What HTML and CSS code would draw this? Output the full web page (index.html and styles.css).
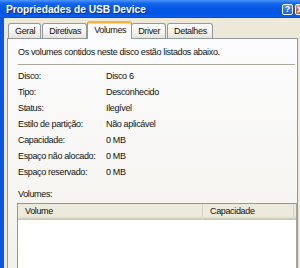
FILE: index.html
```html
<!DOCTYPE html>
<html lang="pt">
<head>
<meta charset="utf-8">
<title>Propriedades de USB Device</title>
<link rel="stylesheet" href="styles.css">
</head>
<body>
<div class="window">
  <div class="titlebar">
    <span class="title">Propriedades de USB Device</span>
    <span class="tbtn help">?</span>
    <span class="tbtn close"><svg width="7" height="7" viewBox="0 0 7 7"><path d="M1 1 L6 6 M6 1 L1 6" stroke="#fff" stroke-width="1.6" stroke-linecap="round"/></svg></span>
  </div>
  <div class="frame">
    <div class="tabs">
      <div class="tab">Geral</div>
      <div class="tab">Diretivas</div>
      <div class="tab active">Volumes</div>
      <div class="tab">Driver</div>
      <div class="tab">Detalhes</div>
    </div>
    <div class="panel">
      <div class="intro">Os volumes contidos neste disco estão listados abaixo.</div>
      <div class="sep"></div>
      <div class="props">
        <div>Disco:</div><div>Disco 6</div>
        <div>Tipo:</div><div>Desconhecido</div>
        <div>Status:</div><div>Ilegível</div>
        <div>Estilo de partição:</div><div>Não aplicável</div>
        <div>Capacidade:</div><div>0 MB</div>
        <div>Espaço não alocado:</div><div>0 MB</div>
        <div>Espaço reservado:</div><div>0 MB</div>
      </div>
      <div class="vol-label">Volumes:</div>
      <div class="list">
        <div class="list-head">
          <div class="col col-vol">Volume</div>
          <div class="col col-cap">Capacidade</div>
        </div>
      </div>
    </div>
  </div>
</div>
</body>
</html>
```

FILE: styles.css
```css
html, body {
  margin: 0;
  padding: 0;
  width: 300px;
  height: 268px;
  overflow: hidden;
  background: #ECE9D8;
}

body {
  font-family: "Liberation Sans", Arial, sans-serif;
  font-size: 9px;
  letter-spacing: -0.35px;
  color: #111;
}

.window {
  width: 308px;
  height: 268px;
  display: flex;
  flex-direction: column;
  overflow: hidden;
}

.titlebar {
  height: 18px;
  flex: none;
  display: flex;
  align-items: center;
  padding: 0 2px 0 6px;
  background: linear-gradient(#4A95F8 0%, #1767EE 18%, #0558E6 45%, #0354E4 75%, #0A5DEA 92%, #0044D0 100%);
  letter-spacing: 0;
}

.title {
  flex: 1;
  color: #fff;
  font-weight: bold;
  font-size: 10.2px;
  text-shadow: 1px 1px 0 #0A2E9A;
  white-space: nowrap;
}

.tbtn {
  width: 11px;
  height: 11px;
  box-sizing: border-box;
  border: 1px solid #fff;
  border-radius: 2px;
  display: flex;
  align-items: center;
  justify-content: center;
  color: #fff;
  font-weight: bold;
  font-size: 9px;
  line-height: 1;
}

.help {
  background: linear-gradient(#4C8EF8, #1B5EE6);
  margin-right: 2px;
}

.close {
  background: linear-gradient(#F08B66, #D9441E);
}

.frame {
  flex: 1;
  border-left: 4px solid #0B56E8;
  border-right: 4px solid #0B56E8;
  padding: 3px 0 0 3px;
  overflow: hidden;
}

.tabs {
  display: flex;
  align-items: flex-end;
  height: 17px;
  margin-left: 1px;
}

.tab {
  height: 15px;
  box-sizing: border-box;
  border: 1px solid #919B9C;
  border-bottom: none;
  border-radius: 3px 3px 0 0;
  background: linear-gradient(#FFFFFF, #F3F2EE 60%, #E6E4DA);
  padding: 0 5px 0 6px;
  line-height: 14px;
  margin-right: 1px;
  white-space: nowrap;
}

.tab.active {
  height: 18px;
  margin: 0 -1px -1px -1px;
  padding: 0 5px 0 6px;
  border-top: 2px solid #F5B13A;
  box-shadow: inset 0 1px 0 #FFD77A;
  background: #FCFCFE;
  line-height: 15px;
  position: relative;
  z-index: 2;
}

.panel {
  width: 291px;
  height: 231px;
  box-sizing: border-box;
  border: 1px solid #919B9C;
  background: linear-gradient(#FCFCFE, #F6F5F1 70%, #F1F0EA);
  padding: 5px 0 0 10px;
  overflow: hidden;
}

.intro {
  line-height: 16px;
  white-space: nowrap;
}

.sep {
  height: 0;
  border-top: 1px solid #ACA899;
  border-bottom: 1px solid #FFFFFF;
  margin: 4px 2px 2px 0;
}

.props {
  display: grid;
  grid-template-columns: 88px 1fr;
  grid-auto-rows: 16px;
  line-height: 16px;
  white-space: nowrap;
}

.vol-label {
  margin-top: 6px;
  line-height: 16px;
}

.list {
  margin: 1px 0 0 -1px;
  width: 280px;
  height: 80px;
  box-sizing: border-box;
  border: 1px solid #7F9DB9;
  border-right-color: #A5A5A5;
  background: #FFFFFF;
}

.list-head {
  display: flex;
  height: 16px;
  background: #EBEADB;
  box-shadow: inset 0 -1px 0 #CBC7B8, inset 0 -2px 0 #D6D2C2, inset 0 -3px 0 #E2DECD;
}

.col {
  box-sizing: border-box;
  padding-left: 7px;
  line-height: 15px;
}

.col-vol {
  width: 185px;
  border-right: 1px solid #D8D5C6;
}

.col-cap {
  width: 91px;
  border-right: 1px solid #D8D5C6;
}
```
